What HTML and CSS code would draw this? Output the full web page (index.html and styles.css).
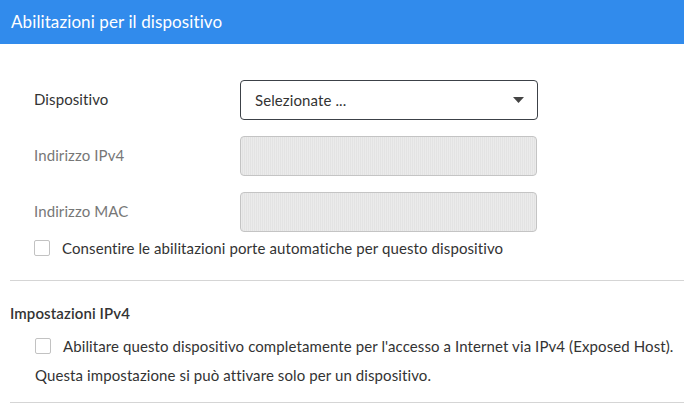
FILE: index.html
```html
<!DOCTYPE html>
<html lang="it">
<head>
<meta charset="utf-8">
<link rel="stylesheet" href="styles.css">
</head>
<body>
<header class="bar"><h1 class="bar-title">Abilitazioni per il dispositivo</h1></header>
<main class="content">
  <section class="form">
    <div class="row">
      <label class="label">Dispositivo</label>
      <div class="select">
        <span class="select-text">Selezionate ...</span>
        <svg class="caret" width="11" height="6" viewBox="0 0 11 6"><path d="M0 0H11L5.5 6Z" fill="#444"/></svg>
      </div>
    </div>
    <div class="row">
      <label class="label label-muted">Indirizzo IPv4</label>
      <div class="input-disabled"></div>
    </div>
    <div class="row">
      <label class="label label-muted">Indirizzo MAC</label>
      <div class="input-disabled"></div>
    </div>
    <div class="check-row check-first">
      <span class="checkbox"></span>
      <span class="check-text">Consentire le abilitazioni porte automatiche per questo dispositivo</span>
    </div>
  </section>
  <hr class="divider">
  <section class="ipv4">
    <h2 class="section-title">Impostazioni IPv4</h2>
    <div class="check-row">
      <span class="checkbox"></span>
      <span class="check-text">Abilitare questo dispositivo completamente per l'accesso a Internet via IPv4 (Exposed Host).</span>
    </div>
    <p class="note">Questa impostazione si può attivare solo per un dispositivo.</p>
  </section>
  <hr class="divider">
</main>
</body>
</html>
```
FILE: styles.css
```css
* { box-sizing: border-box; }
body {
  margin: 0;
  font-family: Lato, "Liberation Sans", sans-serif;
  font-size: 15px;
  letter-spacing: 0.1px;
  color: #333;
  background: #fff;
}
.bar {
  background: #318bec;
  height: 44px;
  display: flex;
  align-items: center;
  padding-left: 11px;
}
.bar-title {
  margin: 0 0 2px 0;
  font-size: 17px;
  font-weight: 400;
  color: #fff;
  letter-spacing: 0.1px;
}
.content {
  padding-left: 10px;
}
.form {
  padding: 36px 0 0 24px;
}
.row {
  display: flex;
  align-items: center;
  height: 39px;
  margin-bottom: 17px;
}
.label {
  width: 206px;
  color: #333;
  margin-bottom: 2px;
}
.label-muted { color: #777; }
.select {
  width: 298px;
  height: 40px;
  border: 1px solid #3c4147;
  border-radius: 4px;
  display: flex;
  align-items: center;
  justify-content: space-between;
  padding: 0 13px 0 14px;
}
.select-text { color: #333; }
.input-disabled {
  width: 297px;
  height: 40px;
  border: 1px solid #c4c4c4;
  border-radius: 4px;
  background: repeating-linear-gradient(90deg, #ebebeb 0 1px, #e3e3e3 1px 2px);
}
.check-row {
  display: flex;
  align-items: center;
  gap: 12px;
}
.check-first {
  margin-top: -17px;
  height: 34px;
}
.checkbox {
  width: 16px;
  height: 16px;
  border: 1px solid #c2c2c2;
  border-radius: 2px;
  flex: none;
  background: #fff;
}
.divider {
  border: 0;
  border-top: 1px solid #d5d5d5;
  margin: 15px 0 0 0;
}
.ipv4 {
  padding: 23px 0 0 0;
}
.section-title {
  margin: 0 0 12px 0;
  font-size: 15px;
  font-weight: 600;
  color: #333;
}
.ipv4 .check-row {
  padding-left: 25px;
  height: 24px;
}
.note {
  margin: 5px 0 11px 25px;
  line-height: 24px;
}
```
